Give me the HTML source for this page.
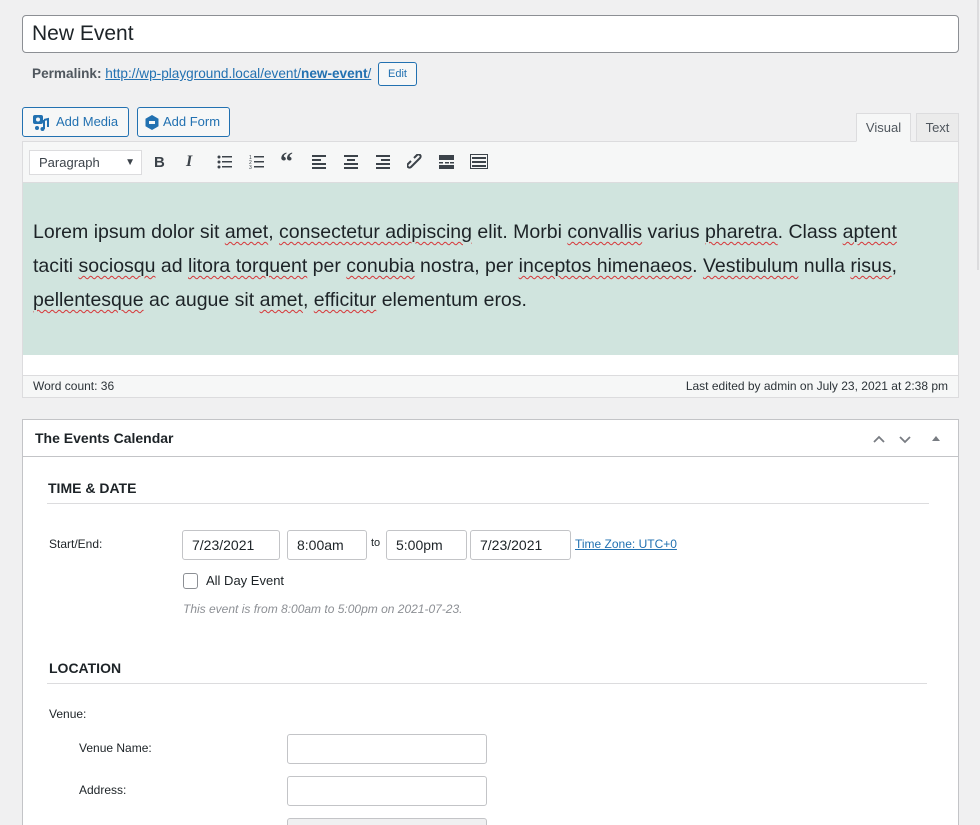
<!DOCTYPE html>
<html><head><style>
*{box-sizing:border-box;margin:0;padding:0}
html,body{width:980px;height:825px;overflow:hidden}
body{background:#f0f0f1;font-family:"Liberation Sans",Arial,sans-serif;color:#1d2327;position:relative;font-size:13px}
.abs{position:absolute}
.title{left:22px;top:15px;width:937px;height:38px;background:#fff;border:1px solid #8c8f94;border-radius:4px;font-size:21px;padding:6px 9px;line-height:24px}
.perma{left:32px;top:66px;font-size:13.6px;color:#50575e}
.perma b{font-weight:bold}
.perma a{color:#2271b1;text-decoration:underline}
.editbtn{left:378px;top:62px;width:39px;height:24px;border:1px solid #2271b1;border-radius:3px;color:#2271b1;font-size:11px;text-align:center;line-height:22px;background:#f6f7f7}
.btn{top:107px;height:30px;border:1px solid #2271b1;border-radius:3px;color:#2271b1;background:#f6f7f7;font-size:13px;line-height:28px;padding-left:33px}
.tab{top:113px;height:29px;border:1px solid #dcdcde;font-size:13px;color:#50575e;line-height:27px;text-align:center}
.ed{left:22px;top:141px;width:937px;height:257px;border:1px solid #dcdcde;background:#fff}
.tb{height:41px;background:#f6f7f7;border-bottom:1px solid #dcdcde;position:relative}
.sel{position:absolute;left:6px;top:8px;width:113px;height:25px;background:#fff;border:1px solid #dcdcde;font-size:13px;line-height:23px;padding-left:9px;color:#3c434a}
.ic{position:absolute;top:12px;color:#3c434a}
.content{position:absolute;left:0;top:41px;width:935px;height:172px;background:#d0e4de;padding:32px 20px 32px 10px;font-size:19.5px;line-height:34px;color:#1d2327}
.u{text-decoration:underline wavy #d63638;text-decoration-thickness:1px;text-underline-offset:3px}
.status{position:absolute;left:0;bottom:0;width:935px;height:22px;background:#f6f7f7;border-top:1px solid #dcdcde;font-size:12px;line-height:21px;padding:0 10px;color:#2c3338}
.box{left:22px;top:419px;width:937px;height:420px;background:#fff;border:1px solid #c3c4c7}
.bh{height:37px;border-bottom:1px solid #c3c4c7;font-size:14px;font-weight:bold;line-height:36px;padding-left:12px;position:relative}
.h3{font-size:14px;font-weight:bold;color:#1d2327;position:absolute}
.hr{position:absolute;height:1px;background:#dcdcde}
.lbl{position:absolute;font-size:12px;color:#1d2327}
.inp{position:absolute;height:30px;border:1px solid #c3c4c7;border-radius:3px;background:#fff;font-size:14px;line-height:28px;padding-left:9px;color:#1d2327}
</style></head><body>
<div class="abs" style="left:977px;top:0;width:2px;height:270px;background:#dcdcde"></div>
<div class="abs title">New Event</div>
<div class="abs perma"><b>Permalink:</b> <a>http://wp-playground.local/event/<b>new-event</b>/</a></div>
<div class="abs editbtn">Edit</div>
<div class="abs btn" style="left:22px;width:107px"><svg class="abs" style="left:9px;top:6px" width="18" height="18" viewBox="0 0 18 18"><rect x="1" y="1" width="10" height="9" rx="2" fill="#2271b1"/><circle cx="6" cy="5.5" r="2" fill="#f6f7f7"/><path d="M12 6v9M12 6l4 -1v8" stroke="#2271b1" stroke-width="2" fill="none"/><circle cx="10.5" cy="15" r="2" fill="#2271b1"/><circle cx="5" cy="14" r="2" fill="#2271b1"/></svg>Add Media</div>
<div class="abs btn" style="left:137px;width:93px;padding-left:25px"><svg class="abs" style="left:7px;top:7px" width="14" height="15" viewBox="0 0 14 15"><path d="M7 0L13.5 3.7V11.3L7 15L0.5 11.3V3.7Z" fill="#2271b1"/><rect x="4" y="6" width="6" height="3" fill="#f6f7f7"/></svg>Add Form</div>
<div class="abs tab" style="left:856px;width:55px;background:#f6f7f7;border-bottom-color:#f6f7f7;z-index:2">Visual</div>
<div class="abs tab" style="left:916px;width:43px;background:#ebebeb">Text</div>
<div class="abs ed">
 <div class="tb">
  <div class="sel">Paragraph<span style="position:absolute;right:6px;top:0;font-size:10px">▼</span></div>
  <div class="ic" style="left:131px;font-weight:bold;font-size:15px;top:12px">B</div>
  <div class="ic" style="left:163px;font-style:italic;font-weight:bold;font-size:16px;top:11px;font-family:'Liberation Serif',serif">I</div>
  <svg class="ic" style="left:194px;top:13px" width="16" height="14"><g fill="#3c434a"><circle cx="2" cy="2" r="1.5"/><circle cx="2" cy="7" r="1.5"/><circle cx="2" cy="12" r="1.5"/><rect x="5" y="1" width="10" height="1.5"/><rect x="5" y="6" width="10" height="1.5"/><rect x="5" y="11" width="10" height="1.5"/></g></svg>
  <svg class="ic" style="left:226px;top:13px" width="16" height="14"><g fill="#3c434a"><text x="0" y="4" font-size="5">1</text><text x="0" y="9" font-size="5">2</text><text x="0" y="14" font-size="5">3</text><rect x="5" y="1" width="10" height="1.5"/><rect x="5" y="6" width="10" height="1.5"/><rect x="5" y="11" width="10" height="1.5"/></g></svg>
  <div class="ic" style="left:257px;font-weight:bold;font-size:26px;top:7px;font-family:'Liberation Serif',serif;line-height:26px">“</div>
  <svg class="ic" style="left:289px;top:13px" width="16" height="14"><g fill="#3c434a"><rect y="0" width="14" height="2"/><rect y="4" width="9" height="2"/><rect y="8" width="14" height="2"/><rect y="12" width="14" height="2"/></g></svg>
  <svg class="ic" style="left:321px;top:13px" width="16" height="14"><g fill="#3c434a"><rect y="0" width="14" height="2"/><rect x="3" y="4" width="8" height="2"/><rect y="8" width="14" height="2"/><rect y="12" width="14" height="2"/></g></svg>
  <svg class="ic" style="left:353px;top:13px" width="16" height="14"><g fill="#3c434a"><rect y="0" width="14" height="2"/><rect x="5" y="4" width="9" height="2"/><rect y="8" width="14" height="2"/><rect y="12" width="14" height="2"/></g></svg>
  <svg class="ic" style="left:384px;top:12px" width="17" height="17" viewBox="0 0 17 17"><g stroke="#3c434a" stroke-width="2" fill="none"><path d="M7 10l-3 3a2 2 0 0 1-3-3l3-3M10 7l3-3a2 2 0 0 0-3-3l-3 3M6 11l5-5"/></g></svg>
  <svg class="ic" style="left:416px;top:13px" width="16" height="14"><g fill="#3c434a"><rect y="0" width="15" height="5"/><rect y="7" width="4" height="1.5"/><rect x="6" y="7" width="4" height="1.5"/><rect x="11" y="7" width="4" height="1.5"/><rect y="10" width="15" height="4"/></g></svg>
  <svg class="ic" style="left:447px;top:12px" width="18" height="16"><rect x="0.5" y="0.5" width="17" height="14" fill="none" stroke="#3c434a"/><g fill="#3c434a"><rect x="2" y="3" width="14" height="2"/><rect x="2" y="7" width="14" height="2"/><rect x="2" y="11" width="14" height="2"/></g></svg>
 </div>
 <div class="content">Lorem ipsum dolor sit <span class="u">amet</span>, <span class="u">consectetur adipiscing</span> elit. Morbi <span class="u">convallis</span> varius <span class="u">pharetra</span>. Class <span class="u">aptent</span><br>taciti <span class="u">sociosqu</span> ad <span class="u">litora torquent</span> per <span class="u">conubia</span> nostra, per <span class="u">inceptos himenaeos</span>. <span class="u">Vestibulum</span> nulla <span class="u">risus</span>,<br><span class="u">pellentesque</span> ac augue sit <span class="u">amet</span>, <span class="u">efficitur</span> elementum eros.</div>
 <div class="status">Word count: 36<span style="float:right">Last edited by admin on July 23, 2021 at 2:38 pm</span></div>
</div>
<div class="abs box" style="height:406px;border-bottom:none">
 <div class="bh">The Events Calendar
  <svg style="position:absolute;right:16px;top:13px" width="70" height="12"><path d="M2 9l5-5 5 5M28 4l5 5 5-5" stroke="#787c82" stroke-width="1.8" fill="none"/><path d="M60 8l4-5 4 5z" fill="#787c82"/></svg>
 </div>
 <div class="h3" style="left:25px;top:60px">TIME &amp; DATE</div>
 <div class="hr" style="left:24px;top:83px;width:882px"></div>
 <div class="lbl" style="left:26px;top:117px">Start/End:</div>
 <div class="inp" style="left:159px;top:110px;width:98px">7/23/2021</div>
 <div class="inp" style="left:264px;top:110px;width:80px">8:00am</div>
 <div class="lbl" style="left:348px;top:117px;font-size:11px">to</div>
 <div class="inp" style="left:363px;top:110px;width:81px">5:00pm</div>
 <div class="inp" style="left:447px;top:110px;width:101px">7/23/2021</div>
 <div class="lbl" style="left:552px;top:117px;color:#2271b1;text-decoration:underline">Time Zone: UTC+0</div>
 <div class="abs" style="left:160px;top:153px;width:15px;height:16px;border:1px solid #8c8f94;border-radius:3px"></div>
 <div class="lbl" style="left:183px;top:153px;font-size:13px">All Day Event</div>
 <div class="lbl" style="left:160px;top:182px;font-style:italic;color:#8c8f94">This event is from 8:00am to 5:00pm on 2021-07-23.</div>
 <div class="h3" style="left:26px;top:240px">LOCATION</div>
 <div class="hr" style="left:24px;top:263px;width:880px"></div>
 <div class="lbl" style="left:26px;top:287px">Venue:</div>
 <div class="lbl" style="left:56px;top:321px">Venue Name:</div>
 <div class="inp" style="left:264px;top:314px;width:200px"></div>
 <div class="lbl" style="left:56px;top:363px">Address:</div>
 <div class="inp" style="left:264px;top:356px;width:200px"></div>
 <div class="inp" style="left:264px;top:398px;width:200px;background:#f0f0f1"></div>
</div>
</body></html>
